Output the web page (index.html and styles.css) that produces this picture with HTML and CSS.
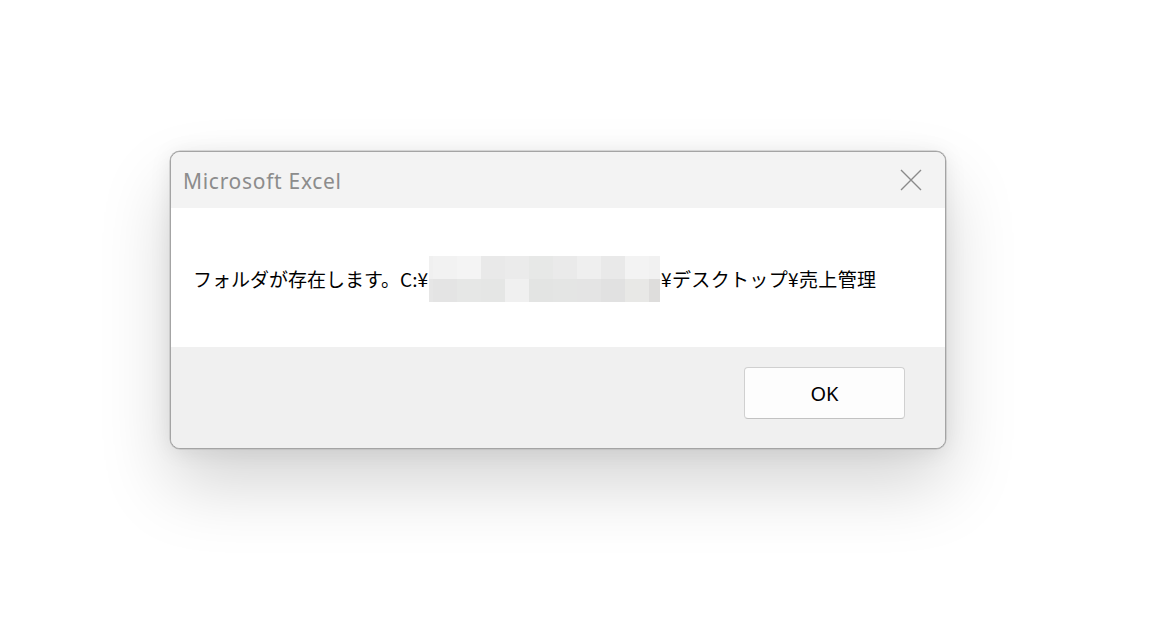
FILE: index.html
```html
<!DOCTYPE html>
<html lang="ja">
<head>
<meta charset="utf-8">
<title>Microsoft Excel</title>
<link rel="stylesheet" href="styles.css">
</head>
<body>
<div class="page">
  <div class="dialog">
    <div class="titlebar">
      <span class="title">Microsoft Excel</span>
      <span class="close" aria-label="閉じる">
        <svg width="22" height="22" viewBox="0 0 22 22"><path d="M1 1 L21 21 M21 1 L1 21" stroke="#8a8a8a" stroke-width="1.4" fill="none"/></svg>
      </span>
    </div>
    <div class="content">
      <p class="message"><span>フォルダが存在します。C:¥</span><span class="mosaic"><span class="row"><i class="c n" style="background:#f0f0f0"></i><i class="c" style="background:#f2f2f2"></i><i class="c" style="background:#f4f4f4"></i><i class="c" style="background:#e9e9e9"></i><i class="c" style="background:#ebebeb"></i><i class="c" style="background:#e7e8e7"></i><i class="c" style="background:#eaeaea"></i><i class="c" style="background:#efefef"></i><i class="c" style="background:#e9e9e9"></i><i class="c" style="background:#f3f3f3"></i><i class="c e" style="background:#f1f1f1"></i></span><span class="row"><i class="c n" style="background:#e6e6e6"></i><i class="c" style="background:#e4e4e4"></i><i class="c" style="background:#e6e7e6"></i><i class="c" style="background:#e5e6e5"></i><i class="c" style="background:#f0f0f0"></i><i class="c" style="background:#e3e4e3"></i><i class="c" style="background:#e4e5e4"></i><i class="c" style="background:#e4e4e4"></i><i class="c" style="background:#e1e1e1"></i><i class="c" style="background:#e8e8e6"></i><i class="c e" style="background:#dedddc"></i></span></span><span class="tail">¥デスクトップ¥売上管理</span></p>
    </div>
    <div class="footer">
      <button class="ok">OK</button>
    </div>
  </div>
</div>
</body>
</html>
```
FILE: styles.css
```css
html, body {
  margin: 0;
  padding: 0;
  background: #ffffff;
}
.page {
  padding: 151px 0 0 170px;
  min-height: 636px;
  box-sizing: border-box;
}
.dialog {
  width: 774px;
  border: 1px solid #a4a4a4;
  border-radius: 10px;
  overflow: hidden;
  background: #f0f0f0;
  box-shadow: 0 0 0 0.5px #b8b8b8, 0 36px 70px rgba(0,0,0,0.17), 0 2px 22px rgba(0,0,0,0.08);
  font-family: "Noto Sans CJK JP", "Noto Sans", sans-serif;
}
.titlebar {
  height: 56px;
  background: #f3f3f3;
  display: flex;
  align-items: center;
  justify-content: space-between;
  padding: 0 23px 0 12px;
}
.title {
  font-family: "Noto Sans", "Open Sans", sans-serif;
  font-size: 21px;
  color: #8c8c8c;
  letter-spacing: 0.7px;
  margin-top: 1px;
}
.close {
  display: flex;
  width: 22px;
  height: 22px;
}
.content {
  background: #ffffff;
  height: 139px;
  display: flex;
  align-items: center;
  padding-left: 22px;
}
.message {
  margin: 0;
  display: flex;
  align-items: center;
  font-size: 19px;
  color: #000;
  margin-top: 2px;
}
.tail {
  letter-spacing: 0.35px;
}
.mosaic {
  display: flex;
  flex-direction: column;
  margin: 0 1px 0 1px;
}
.row {
  display: flex;
}
.c {
  display: block;
  width: 24px;
  height: 23px;
}
.c.n { width: 4px; }
.c.e { width: 11px; }
.footer {
  height: 101px;
  background: #f0f0f0;
  display: flex;
  justify-content: flex-end;
  align-items: flex-start;
  padding: 20px 40px 0 0;
  box-sizing: border-box;
}
.ok {
  width: 161px;
  height: 52px;
  background: #fdfdfd;
  border: 1px solid #d0d0d0;
  border-bottom-color: #c2c2c2;
  border-radius: 4px;
  font-family: "Noto Sans", "Open Sans", sans-serif;
  font-size: 20px;
  color: #000;
  padding: 0;
}
```
